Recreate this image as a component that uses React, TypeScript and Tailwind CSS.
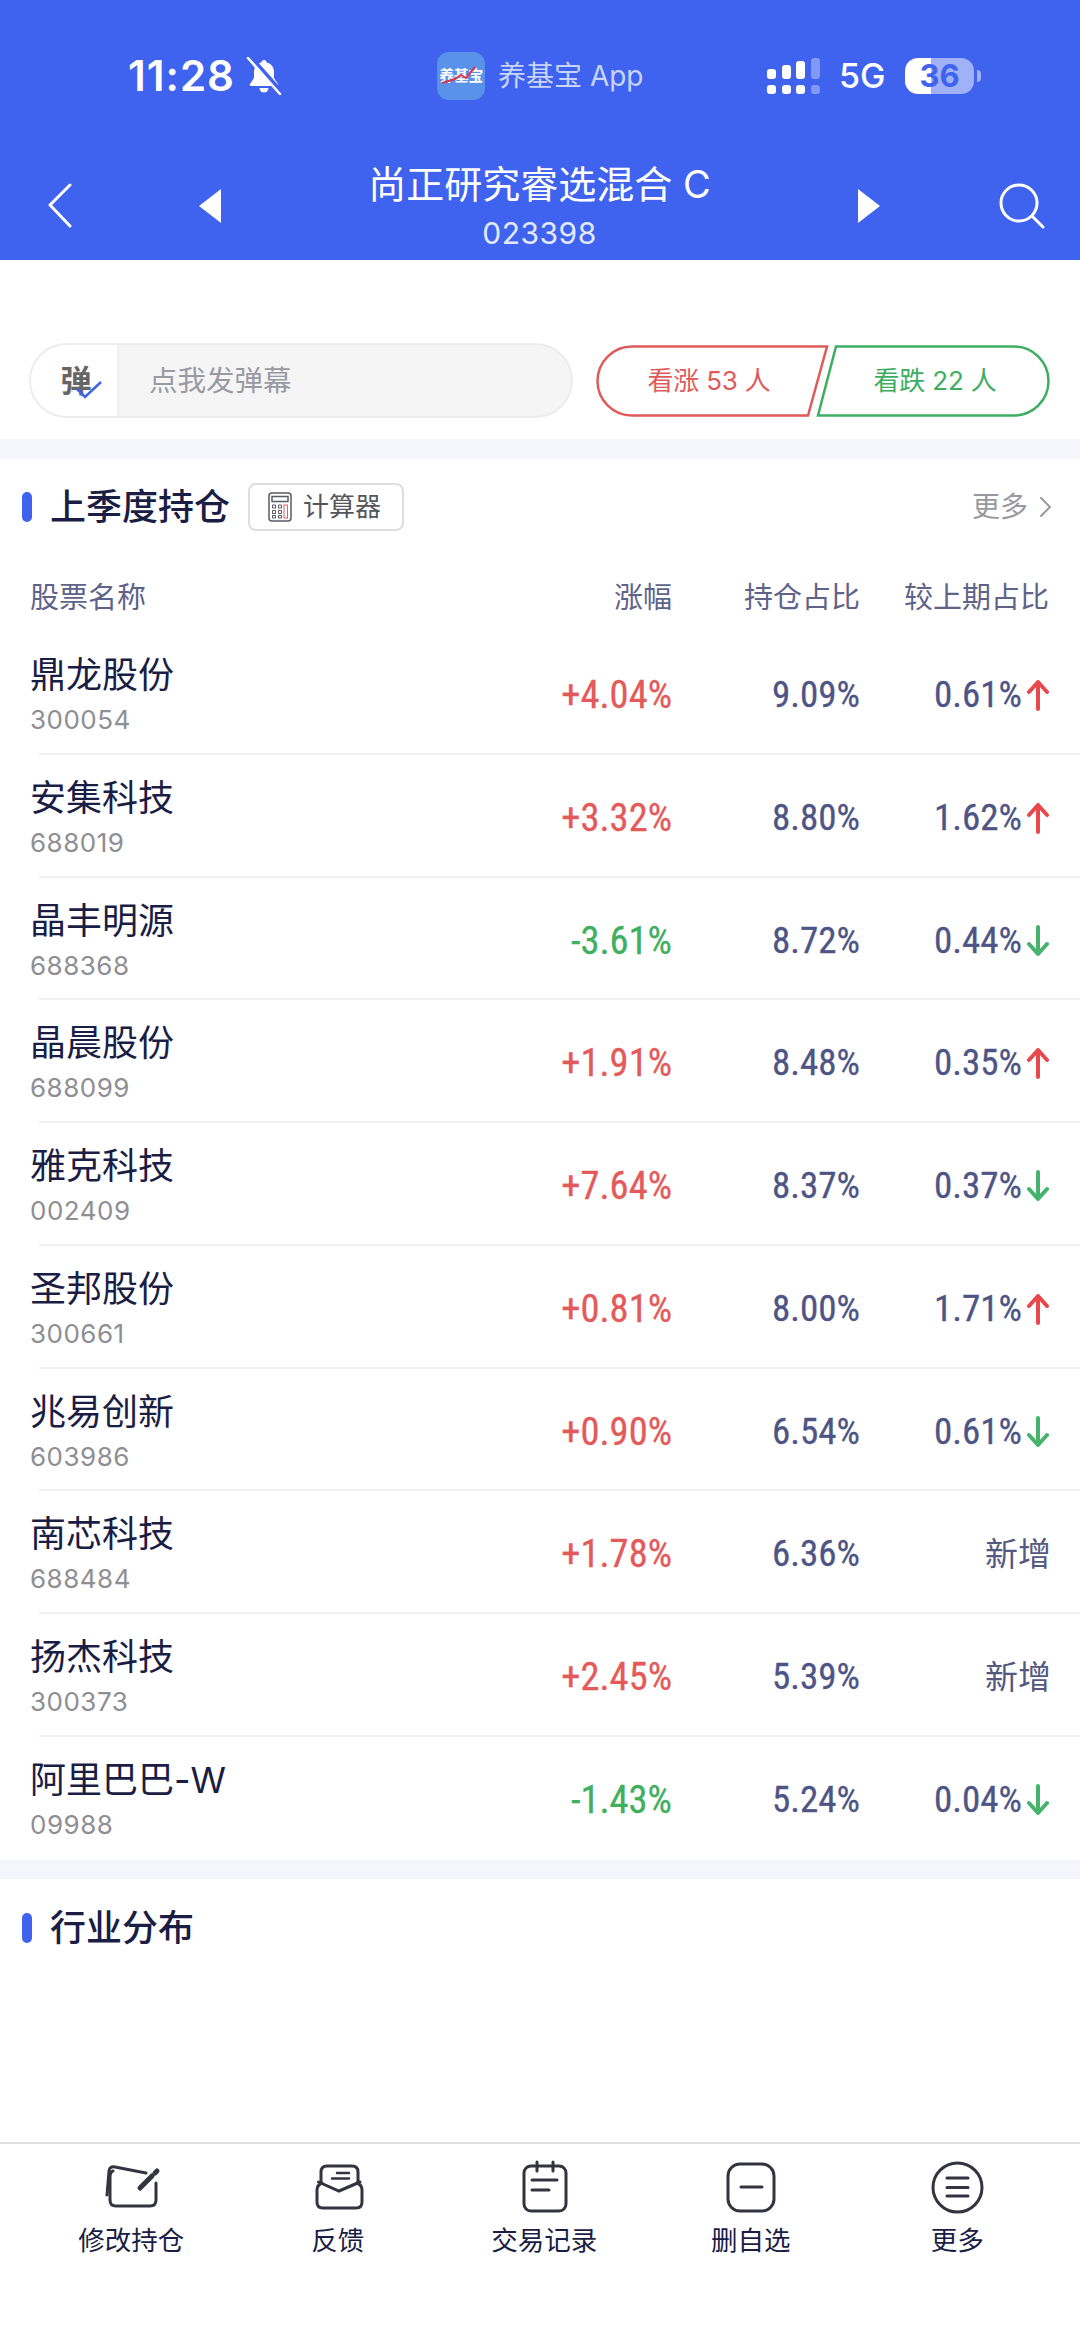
const rows = [
  { name: '鼎龙股份', code: '300054', pct: '+4.04%', hold: '9.09%', diff: '0.61%', dir: 'up' },
  { name: '安集科技', code: '688019', pct: '+3.32%', hold: '8.80%', diff: '1.62%', dir: 'up' },
  { name: '晶丰明源', code: '688368', pct: '-3.61%', hold: '8.72%', diff: '0.44%', dir: 'down' },
  { name: '晶晨股份', code: '688099', pct: '+1.91%', hold: '8.48%', diff: '0.35%', dir: 'up' },
  { name: '雅克科技', code: '002409', pct: '+7.64%', hold: '8.37%', diff: '0.37%', dir: 'down' },
  { name: '圣邦股份', code: '300661', pct: '+0.81%', hold: '8.00%', diff: '1.71%', dir: 'up' },
  { name: '兆易创新', code: '603986', pct: '+0.90%', hold: '6.54%', diff: '0.61%', dir: 'down' },
  { name: '南芯科技', code: '688484', pct: '+1.78%', hold: '6.36%', diff: '新增', dir: 'new' },
  { name: '扬杰科技', code: '300373', pct: '+2.45%', hold: '5.39%', diff: '新增', dir: 'new' },
  { name: '阿里巴巴-W', code: '09988', pct: '-1.43%', hold: '5.24%', diff: '0.04%', dir: 'down' },
];

const numStyle =
  "font-['Liberation_Sans_Narrow','Roboto_Condensed','Liberation_Sans',sans-serif] leading-[44px] [-webkit-text-stroke:0.3px]";

function Arrow({ up }: { up: boolean }) {
  return (
    <svg width="22" height="32" viewBox="0 0 22 32" className="ml-[5px] shrink-0" fill="none" strokeWidth="4" strokeLinecap="round" strokeLinejoin="round" stroke={up ? '#E8474C' : '#45B36B'}>
      {up ? <path d="M11 30V3M2 13l9-10 9 10" /> : <path d="M11 2v27M2 19l9 10 9-10" />}
    </svg>
  );
}

function SectionTitle({ title }: { title: string }) {
  return (
    <div className="flex items-center">
      <div className="ml-[22px] h-[30px] w-[10px] rounded-full bg-[#3F63EE]" />
      <h2 className="ml-[18px] text-[36px] leading-[48px] font-medium text-[#1A1D44]">{title}</h2>
    </div>
  );
}

function StatusBar() {
  return (
    <div className="mt-[51px] flex h-[50px] items-center pl-[128px] text-white">
      <div className="flex w-[309px] items-center">
        <span className="w-[112px] text-[42px] leading-[50px] font-semibold tracking-[1px]">11:28</span>
        <svg width="36" height="38" viewBox="0 0 36 38" className="ml-[6px]">
          <path fill="#fff" d="M18 3c-1.500 0-2.500 1-2.600 2.500C10.500 6.500 8 10.500 8 15v6l-4 6c-.6 1 0 2 1 2h26c1 0 1.600-1 1-2l-4-6v-6c0-4.500-2.500-8.500-7.400-9.500C20.500 4 19.500 3 18 3z" />
          <path fill="#fff" d="M13.500 31h9a4.500 4.500 0 0 1-9 0z" />
          <path stroke="#3F63EE" strokeWidth="5" d="M4 0l32 36" />
          <path stroke="#fff" strokeWidth="2.500" strokeLinecap="round" d="M2 1l32 36" />
        </svg>
      </div>
      <div className="flex w-[330px] items-center">
        <div className="relative flex h-[48px] w-[48px] items-center justify-center rounded-[12px] bg-[#5A92EA]">
          <span className="text-[15px] leading-[18px] font-bold tracking-[-0.5px] text-white">养基宝</span>
          <svg width="48" height="48" viewBox="0 0 48 48" className="absolute inset-0">
            <path d="M5 31l13-4 6-4 5 3 9-11" fill="none" stroke="#D8364F" strokeWidth="2" />
          </svg>
        </div>
        <span className="ml-[13px] text-[28px] leading-[36px] text-[#C9D4FB]">养基宝 App</span>
      </div>
      <svg width="54" height="37" viewBox="0 0 54 37" fill="#fff">
        <rect x="0" y="11" width="9" height="10" rx="3" />
        <rect x="15" y="7" width="9" height="14" rx="3" />
        <rect x="29" y="3" width="9" height="18" rx="3" />
        <rect x="44" y="0" width="9" height="21" rx="3" fillOpacity=".35" />
        <rect x="0" y="27" width="9" height="9" rx="3" />
        <rect x="15" y="27" width="9" height="9" rx="3" />
        <rect x="29" y="27" width="9" height="9" rx="3" />
        <rect x="44" y="27" width="9" height="9" rx="3" fillOpacity=".35" />
      </svg>
      <span className="ml-[18px] w-[47px] text-[34px] leading-[40px] font-medium">5G</span>
      <div className="ml-[19px] flex h-[36px] w-[69px] items-center justify-center rounded-[13px] bg-[linear-gradient(90deg,#fff_26px,#A0B1F7_26px)] text-[31px] leading-[36px] font-bold text-[#3F63EE]">
        36
      </div>
      <div className="ml-[3px] h-[12px] w-[4px] rounded-r-full bg-[#A0B1F7]" />
    </div>
  );
}

function NavBar() {
  return (
    <div className="mt-[63px] flex items-start pr-[35px] pl-[47px] text-white">
      <svg width="152" height="46" viewBox="0 0 152 46" fill="none" stroke="#fff" strokeWidth="3" strokeLinecap="round" strokeLinejoin="round" className="mt-[19px] shrink-0">
        <path d="M23 2L3 22l20 21" />
      </svg>
      <svg width="22" height="34" viewBox="0 0 22 34" fill="#fff" className="mt-[25px] shrink-0">
        <path d="M22 0v34L0 17z" />
      </svg>
      <div className="flex flex-1 flex-col items-center">
        <h1 className="text-[38px] leading-[40px]">尚正研究睿选混合 C</h1>
        <p className="mt-[9px] text-[30px] leading-[40px] tracking-[0.5px] text-[#E3E9FD]">023398</p>
      </div>
      <svg width="22" height="34" viewBox="0 0 22 34" fill="#fff" className="mt-[25px] shrink-0">
        <path d="M0 0v34l22-17z" />
      </svg>
      <svg width="46" height="46" viewBox="0 0 46 46" fill="none" stroke="#fff" strokeWidth="3" strokeLinecap="round" className="mt-[19px] ml-[119px] shrink-0">
        <circle cx="20" cy="20" r="18" />
        <path d="M33 33l11 11" />
      </svg>
    </div>
  );
}

function Danmaku() {
  return (
    <div className="mt-[83px] flex h-[75px] items-center pl-[29px]">
      <div className="flex h-[75px] w-[544px] overflow-hidden rounded-full border-2 border-[#ECECEE] bg-[#F5F5F6]">
        <div className="relative flex w-[88px] items-center justify-center border-r-2 border-[#EFEFF1] bg-white pl-[4px]">
          <span className="text-[31px] leading-[36px] font-bold text-[#666]">弹</span>
          <svg width="26" height="18" viewBox="0 0 26 18" fill="none" stroke="#3F63EE" strokeWidth="2.500" className="absolute top-[36px] left-[45px]">
            <path d="M1 8l8 8L25 1" />
          </svg>
        </div>
        <span className="ml-[30px] self-center text-[28.5px] leading-[36px] text-[#9A9AA3]">点我发弹幕</span>
      </div>
      <div className="relative ml-[23px] flex h-[72px] w-[454px] items-center">
        <svg width="454" height="72" viewBox="0 0 454 72" fill="none" strokeWidth="2.500" className="absolute inset-0">
          <path d="M36 1.500H231L212 70.500H36A34.500 34.500 0 0 1 36 1.500Z" stroke="#E05A5A" />
          <path d="M240 1.500H418A34.500 34.500 0 0 1 418 70.500H222Z" stroke="#3CAE62" />
        </svg>
        <span className="w-[226px] text-center text-[26px] leading-[36px] tracking-[-0.2px] text-[#E05A5A]">看涨 53 人</span>
        <span className="w-[226px] text-center text-[26px] leading-[36px] tracking-[-0.2px] text-[#3CAE62]">看跌 22 人</span>
      </div>
    </div>
  );
}

function HoldingsHead() {
  return (
    <>
      <div className="mt-[24px] flex h-[48px] items-center pr-[28px]">
        <SectionTitle title="上季度持仓" />
        <div className="ml-[18px] flex h-[48px] w-[156px] items-center rounded-[8px] border-2 border-[#DEDEE0] pl-[18px]">
          <svg width="24" height="30" viewBox="0 0 24 30" fill="none" stroke="#5A5B61" strokeWidth="1.500">
            <rect x="1" y="1" width="22" height="28" rx="3" />
            <rect x="4" y="4.500" width="16" height="5" />
            <path d="M4.500 13h3v3h-3zM10.500 13h3v3h-3zM4.500 18.500h3v3h-3zM10.500 18.500h3v3h-3zM4.500 23.500h3v2.500h-3zM10.500 23.500h3v2.500h-3z" strokeWidth="1" />
            <rect x="16" y="13" width="3.500" height="13" stroke="#E0605C" strokeWidth="1" />
          </svg>
          <span className="ml-[11px] text-[26px] leading-[32px] text-[#55565C]">计算器</span>
        </div>
        <span className="ml-auto text-[28px] leading-[36px] text-[#98989E]">更多</span>
        <svg width="13" height="22" viewBox="0 0 13 22" fill="none" stroke="#98989E" strokeWidth="2" strokeLinecap="round" className="ml-[11px]">
          <path d="M2 2l9 9-9 9" />
        </svg>
      </div>
      <div className="mt-[47px] mb-[14px] flex h-[40px] items-center pr-[31px] pl-[30px] text-[29px] leading-[40px] text-[#5F6388]">
        <span className="flex-1">股票名称</span>
        <span className="w-[190px] text-right">涨幅</span>
        <span className="w-[188px] text-right">持仓占比</span>
        <span className="w-[189px] text-right">较上期占比</span>
      </div>
    </>
  );
}

function Row({ row, last }: { row: (typeof rows)[number]; last: boolean }) {
  const isUp = row.pct.startsWith('+');
  return (
    <div className={`ml-[39px] flex h-[122.750px] items-start pr-[31px] ${last ? '' : 'border-b-2 border-[#F1F1F3]'}`}>
      <div className="ml-[-9px] flex-1 pt-[21px]">
        <div className="text-[36px] leading-[44px] text-[#1A1D44]">{row.name}</div>
        <div className="mt-[7px] text-[26px] leading-[32px] tracking-[0.5px] text-[#8E8E93]">{row.code}</div>
      </div>
      <div className={`mt-[41px] w-[190px] text-right text-[38.500px] ${numStyle} ${isUp ? 'text-[#E45A5A]' : 'text-[#3FAF60]'}`}>{row.pct}</div>
      <div className={`mt-[41px] w-[188px] text-right text-[37px] ${numStyle} text-[#4E5585]`}>{row.hold}</div>
      <div className="mt-[41px] flex h-[44px] w-[189px] items-center justify-end">
        {row.dir === 'new' ? (
          <span className="mr-[-2px] text-[33px] leading-[44px] text-[#55597F]">新增</span>
        ) : (
          <>
            <span className={`text-[37px] ${numStyle} text-[#4E5585]`}>{row.diff}</span>
            <Arrow up={row.dir === 'up'} />
          </>
        )}
      </div>
    </div>
  );
}

function BottomBar() {
  const tabs = [
    {
      label: '修改持仓',
      box: '1 0 60 56',
      icon: (
        <>
          <path d="M7 35L9 11Q9.500 6 15 7L46 13" />
          <path d="M13 11Q10 12 10 17V40Q10 46 16 46H50Q56 46 56 40V23" />
          <path d="M40 28L52 16" strokeWidth="5" />
          <path d="M55 13l2-2" strokeWidth="5" />
        </>
      ),
    },
    {
      label: '反馈',
      box: '-2 0 60 56',
      icon: (
        <>
          <path d="M11 22V12Q11 6 17 6H42Q48 6 48 12V22" />
          <path d="M12 23Q7 25 7 30V42Q7 48 13 48H46Q52 48 52 42V30Q52 25 47 23" />
          <path d="M8.500 22L29 31L50 22" />
          <path d="M27 13H39M22 18.500H39" strokeWidth="2.500" />
        </>
      ),
    },
    {
      label: '交易记录',
      box: '-1 0 60 56',
      icon: (
        <>
          <rect x="9" y="6" width="42" height="45" rx="7" />
          <path d="M22 2V11M38 2V11M17 20H42M17 30H34" />
        </>
      ),
    },
    {
      label: '删自选',
      box: '0 0 60 56',
      icon: (
        <>
          <rect x="7" y="4" width="46" height="47" rx="12" />
          <path d="M20 27H41" />
        </>
      ),
    },
    {
      label: '更多',
      box: '0 0 60 56',
      icon: (
        <>
          <circle cx="30.500" cy="27.500" r="24.500" />
          <path d="M20 18H41M20 27.500H41M20 36H41" />
        </>
      ),
    },
  ];

  return (
    <div className="mt-auto flex h-[205px] border-t-2 border-[#DEDEDE] pt-[16px] pl-[28px]">
      {tabs.map(tab => (
        <div key={tab.label} className="flex w-[206.500px] flex-col items-center">
          <svg width="60" height="56" viewBox={tab.box} fill="none" stroke="#33343F" strokeWidth="3" strokeLinecap="round">
            {tab.icon}
          </svg>
          <span className="mt-[8px] text-[26.500px] leading-[32px] text-[#1A1D44]">{tab.label}</span>
        </div>
      ))}
    </div>
  );
}

export default function App() {
  return (
    <div className="flex h-[2347px] w-[1080px] flex-col overflow-hidden bg-white font-['Inter','Noto_Sans_CJK_SC',sans-serif]">
      <header className="h-[260px] bg-[#3F63EE]">
        <StatusBar />
        <NavBar />
      </header>
      <Danmaku />
      <div className="mt-[21px] h-[20px] bg-[#F5F6FB]" />
      <HoldingsHead />
      <div>
        {rows.map((row, i) => (
          <Row key={row.code} row={row} last={i === rows.length - 1} />
        ))}
      </div>
      <div className="h-[19px] bg-[#F5F6FB]" />
      <div className="mt-[25px]">
        <SectionTitle title="行业分布" />
      </div>
      <BottomBar />
    </div>
  );
}
